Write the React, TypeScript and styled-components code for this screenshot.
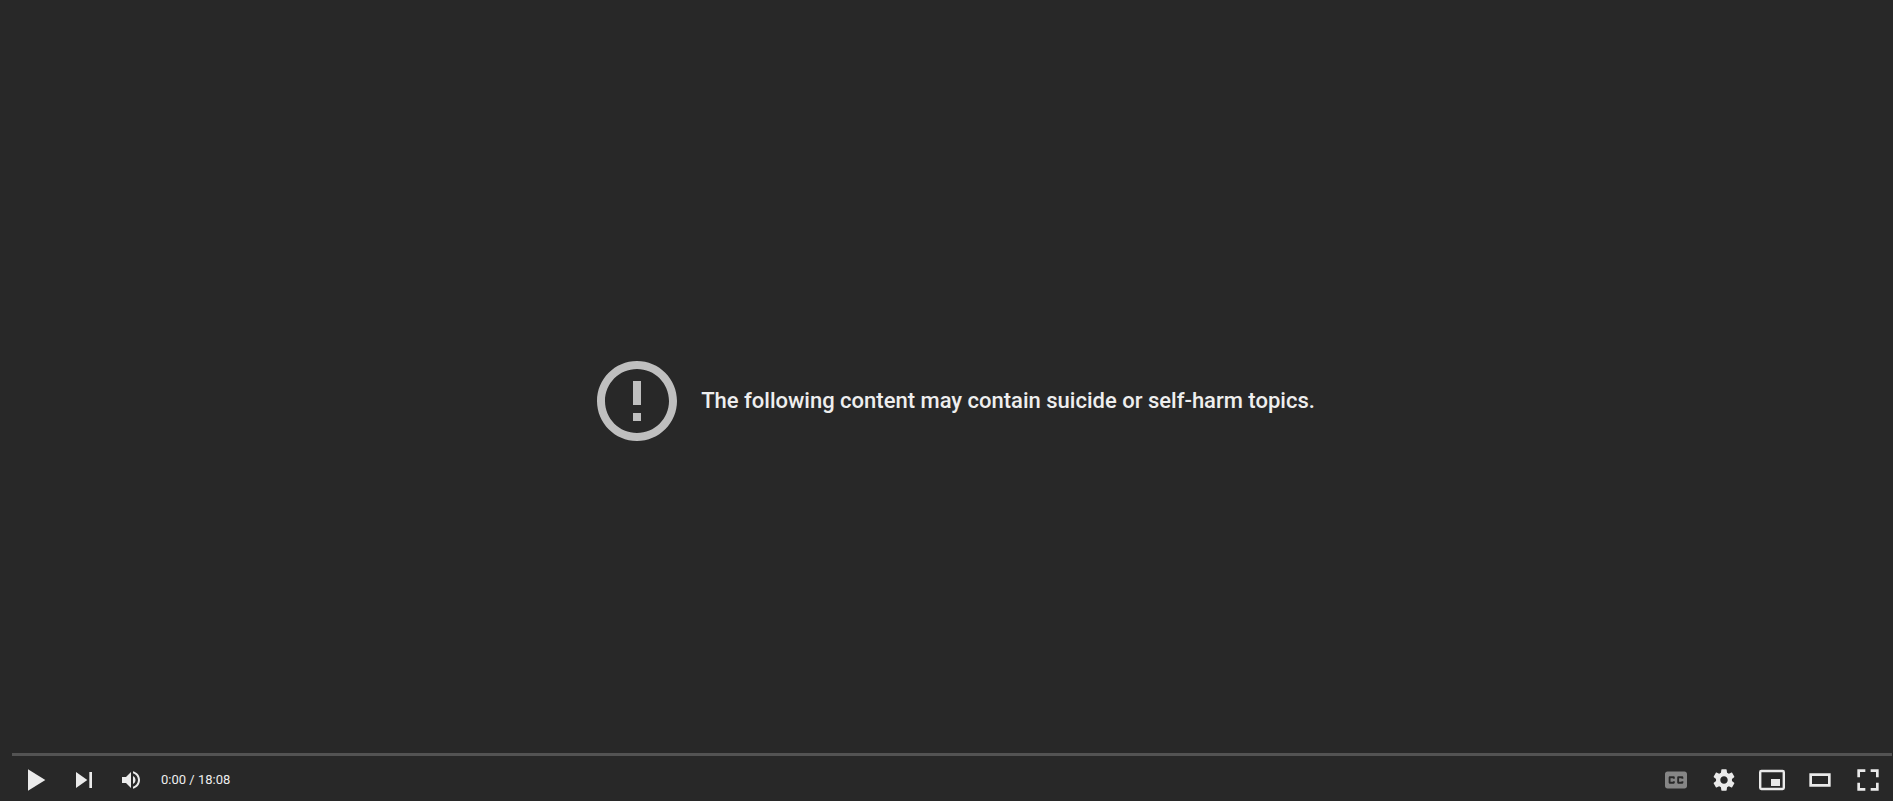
import React from 'react';
import styled, { createGlobalStyle } from 'styled-components';

const GlobalStyle = createGlobalStyle`
  * { box-sizing: border-box; }
  body { margin: 0; background: #282828; font-family: Roboto, "Liberation Sans", Arial, sans-serif; }
`;

const Player = styled.main`
  display: flex;
  flex-direction: column;
  min-height: 100vh;
  background: #282828;
  color: #eee;
`;

const Stage = styled.section`
  flex: 1;
  display: flex;
  align-items: center;
  justify-content: center;
  padding: 48px 0 0 11px;
`;

const Notice = styled.div`
  display: flex;
  align-items: center;
  gap: 16px;
`;

const NoticeIcon = styled.svg`
  display: block;
  flex: none;
  width: 96px;
  height: 96px;
  fill: #bfbfbf;
`;

const NoticeText = styled.p`
  margin: 0;
  font-size: 22px;
  line-height: 28px;
  font-weight: 500;
`;

const Seek = styled.input`
  appearance: none;
  display: block;
  height: 3px;
  margin: 0 1px 0 12px;
  border: 0;
  background: #535353;
  cursor: pointer;

  &::-webkit-slider-thumb {
    appearance: none;
    width: 0;
    height: 0;
  }
`;

const Controls = styled.div`
  display: flex;
  justify-content: space-between;
  height: 45px;
  padding: 0 1px 0 12px;
  overflow: hidden;
`;

const ControlGroup = styled.div`
  display: flex;
  align-items: flex-start;
`;

const IconButton = styled.button`
  display: flex;
  align-items: center;
  justify-content: center;
  width: 48px;
  height: 48px;
  padding: 0;
  border: 0;
  background: none;
  color: #eaeaea;
  cursor: pointer;

  &:disabled {
    color: #868686;
    cursor: default;
  }
`;

const Glyph = styled.svg<{ $size?: number }>`
  display: block;
  width: ${({ $size = 48 }) => $size}px;
  height: ${({ $size = 48 }) => $size}px;
  fill: currentColor;
`;

const Time = styled.div`
  padding-left: 5px;
  font-size: 13px;
  line-height: 48px;
  color: #eee;
  white-space: nowrap;
`;

type ControlProps = {
  label: string;
  size?: number;
  viewBox?: string;
  disabled?: boolean;
  children: React.ReactNode;
};

function Control({ label, size, viewBox = '0 0 36 36', disabled, children }: ControlProps) {
  return (
    <IconButton type="button" aria-label={label} disabled={disabled}>
      <Glyph $size={size} viewBox={viewBox} aria-hidden="true">{children}</Glyph>
    </IconButton>
  );
}

export default function App() {
  return (
    <>
      <GlobalStyle />
      <Player>
        <Stage>
          <Notice role="alert">
            <NoticeIcon viewBox="0 0 24 24" aria-hidden="true">
              <path d="M11 15h2v2h-2zm0-8h2v6h-2zm.99-5C6.47 2 2 6.48 2 12s4.47 10 9.99 10C17.52 22 22 17.52 22 12S17.52 2 11.99 2zM12 20c-4.42 0-8-3.58-8-8s3.58-8 8-8 8 3.58 8 8-3.58 8-8 8z" />
            </NoticeIcon>
            <NoticeText>The following content may contain suicide or self-harm topics.</NoticeText>
          </Notice>
        </Stage>
        <Seek type="range" aria-label="Seek" min={0} max={1088} defaultValue={0} />
        <Controls>
          <ControlGroup>
            <Control label="Play">
              <path d="M12 26 25 18 12 10z" />
            </Control>
            <Control label="Next">
              <path d="M12 24 20.5 18 12 12zM22 12v12h2V12z" />
            </Control>
            <Control label="Mute" size={36}>
              <path d="M8 21h4l5 5V10l-5 5H8zM19 14v8c1.48-.68 2.5-2.23 2.5-4 0-1.74-1.02-3.26-2.5-4zM19 11.29c2.89.86 5 3.54 5 6.71s-2.11 5.85-5 6.71v2.06c4.01-.91 7-4.49 7-8.77s-2.99-7.86-7-8.77z" />
            </Control>
            <Time>0:00 / 18:08</Time>
          </ControlGroup>
          <ControlGroup>
            <Control label="Subtitles unavailable" size={44} disabled>
              <path
                fillRule="evenodd"
                d="M11 11c-1.11 0-2 .9-2 2v10c0 1.1.89 2 2 2h14c1.1 0 2-.9 2-2V13c0-1.1-.9-2-2-2zM17 17h-1.5v-.5h-2v3h2V19H17v1c0 .55-.45 1-1 1h-3c-.55 0-1-.45-1-1v-4c0-.55.45-1 1-1h3c.55 0 1 .45 1 1zM24 17h-1.5v-.5h-2v3h2V19H24v1c0 .55-.45 1-1 1h-3c-.55 0-1-.45-1-1v-4c0-.55.45-1 1-1h3c.55 0 1 .45 1 1z"
              />
            </Control>
            <Control label="Settings">
              <path d="m 23.94,18.78 c .03,-0.25 .05,-0.51 .05,-0.78 0,-0.27 -0.02,-0.52 -0.05,-0.78 l 1.68,-1.32 c .15,-0.12 .19,-0.33 .09,-0.51 l -1.6,-2.76 c -0.09,-0.17 -0.31,-0.24 -0.48,-0.17 l -1.99,.8 c -0.41,-0.32 -0.86,-0.58 -1.35,-0.78 l -0.30,-2.12 c -0.02,-0.19 -0.19,-0.33 -0.39,-0.33 l -3.2,0 c -0.2,0 -0.36,.14 -0.39,.33 l -0.30,2.12 c -0.48,.2 -0.93,.47 -1.35,.78 l -1.99,-0.8 c -0.18,-0.07 -0.39,0 -0.48,.17 l -1.6,2.76 c -0.10,.17 -0.05,.39 .09,.51 l 1.68,1.32 c -0.03,.25 -0.05,.52 -0.05,.78 0,.26 .02,.52 .05,.78 l -1.68,1.32 c -0.15,.12 -0.19,.33 -0.09,.51 l 1.6,2.76 c .09,.17 .31,.24 .48,.17 l 1.99,-0.8 c .41,.32 .86,.58 1.35,.78 l .30,2.12 c .02,.19 .19,.33 .39,.33 l 3.2,0 c .2,0 .36,-0.14 .39,-0.33 l .30,-2.12 c .48,-0.2 .93,-0.47 1.35,-0.78 l 1.99,.8 c .18,.07 .39,0 .48,-0.17 l 1.6,-2.76 c .09,-0.17 .05,-0.39 -0.09,-0.51 l -1.68,-1.32 z m -5.94,2.01 c -1.54,0 -2.8,-1.25 -2.8,-2.8 0,-1.54 1.25,-2.8 2.8,-2.8 1.54,0 2.8,1.25 2.8,2.8 0,1.54 -1.25,2.8 -2.8,2.8 z" />
            </Control>
            <Control label="Miniplayer" viewBox="0 0 48 48">
              <rect x="12.2" y="15" width="23.6" height="18" rx="1.2" fill="none" stroke="currentColor" strokeWidth="2.4" />
              <rect x="23" y="23" width="9" height="7" />
            </Control>
            <Control label="Theater mode">
              <path fillRule="evenodd" d="M26 13v10H10V13zM12 15v6h12v-6z" />
            </Control>
            <Control label="Full screen">
              <path d="M10 16h2v-4h4v-2h-6zM20 10v2h4v4h2v-6zM24 24h-4v2h6v-6h-2zM12 20h-2v6h6v-2h-4z" />
            </Control>
          </ControlGroup>
        </Controls>
      </Player>
    </>
  );
}
